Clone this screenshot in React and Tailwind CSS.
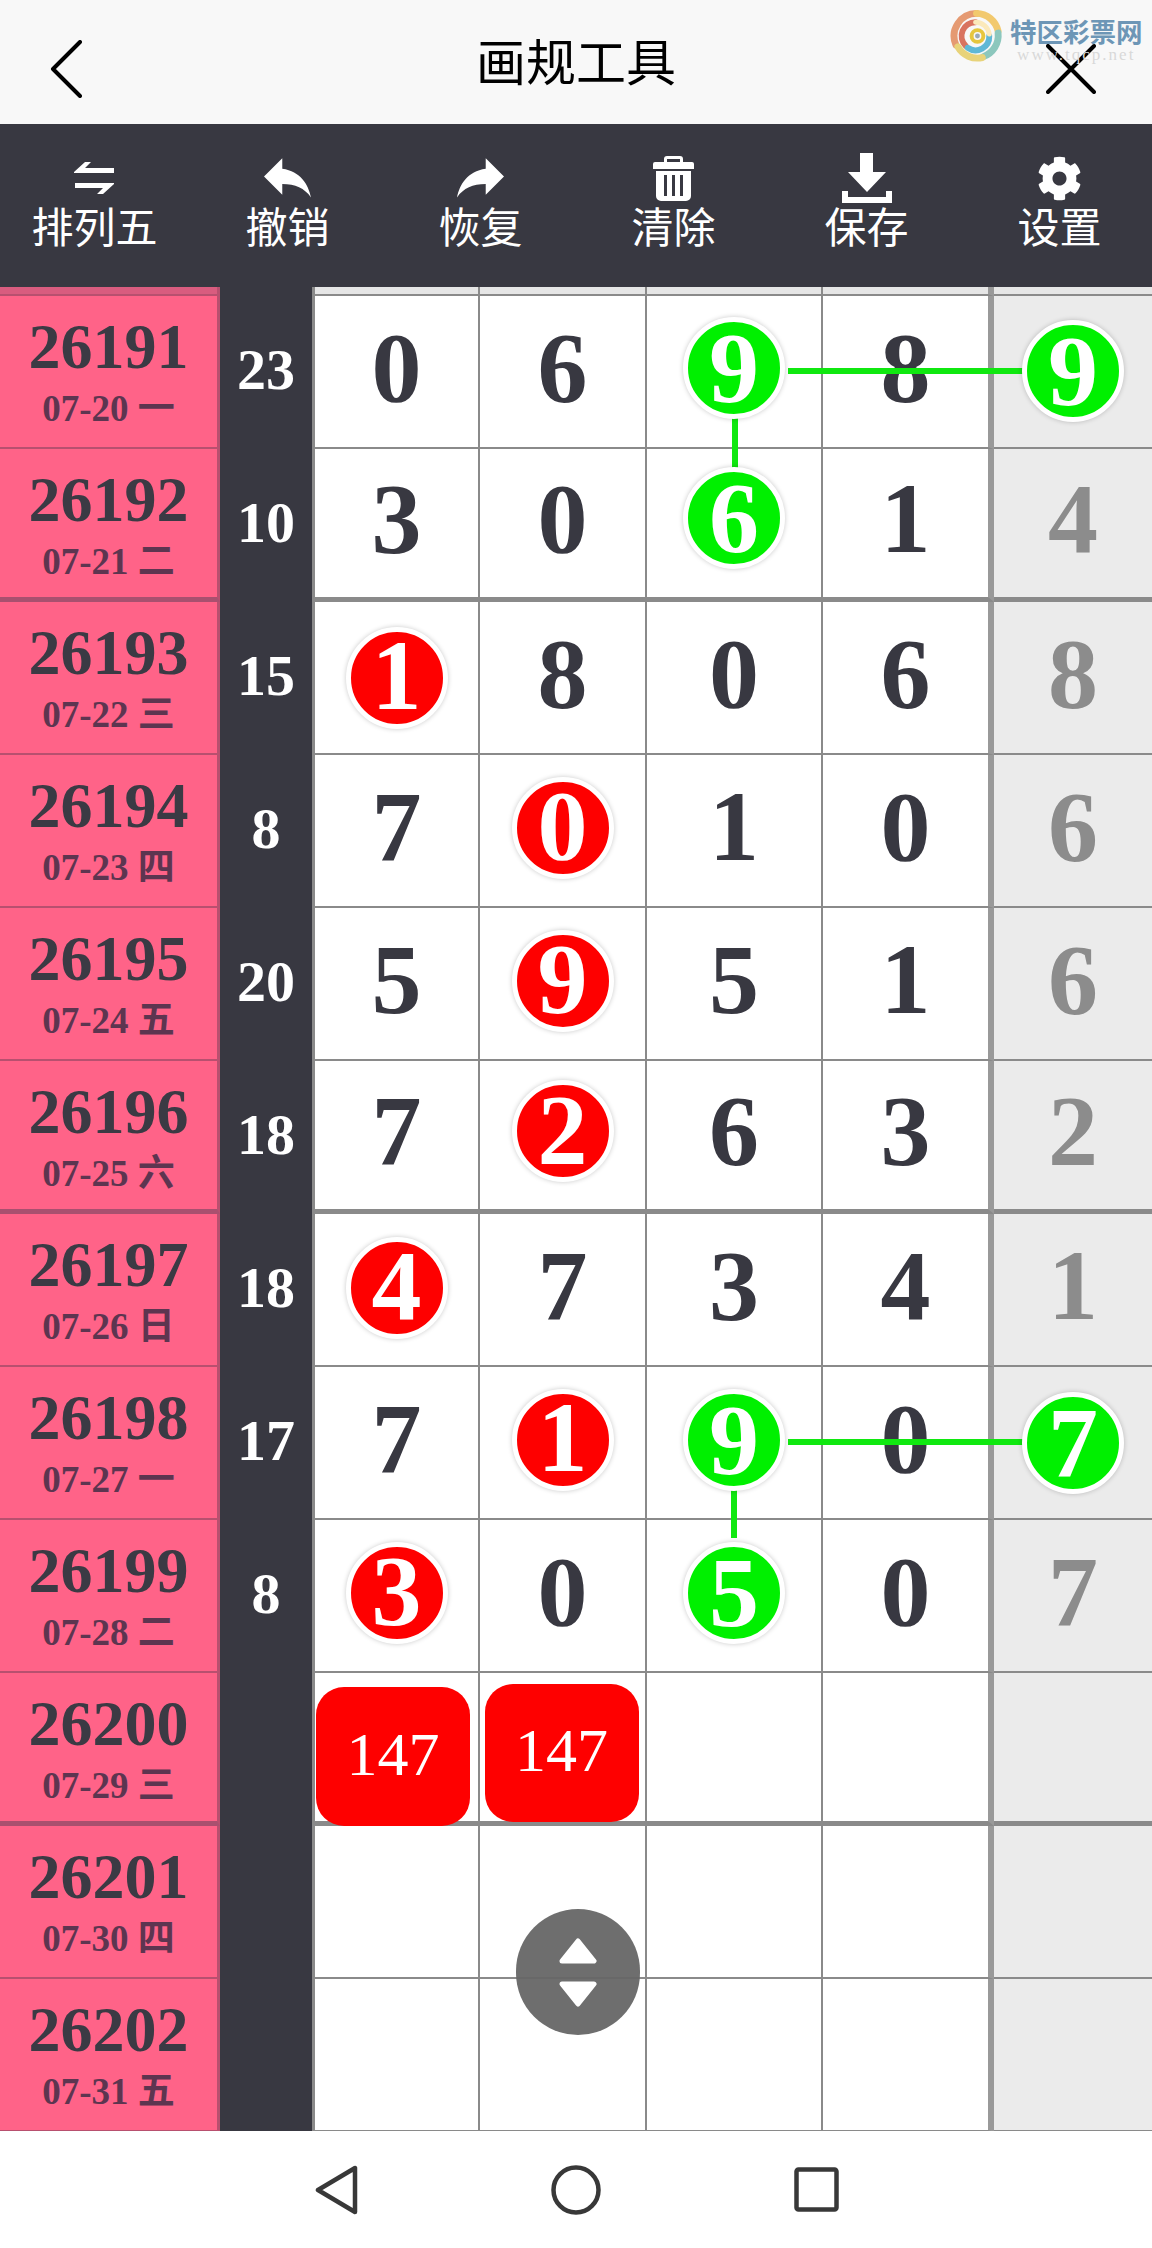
import React from "react";
import { FaCog } from "react-icons/fa";

const rows = [
  { id: "26191", date: "07-20 一", score: "23", nums: ["0", "6", "9", "8", "9"], marks: { 2: ["g", -3], 4: ["g", 0] } },
  { id: "26192", date: "07-21 二", score: "10", nums: ["3", "0", "6", "1", "4"], marks: { 2: ["g", -4] }, heavy: true },
  { id: "26193", date: "07-22 三", score: "15", nums: ["1", "8", "0", "6", "8"], marks: { 0: ["r", 1] } },
  { id: "26194", date: "07-23 四", score: "8", nums: ["7", "0", "1", "0", "6"], marks: { 1: ["r", -2] } },
  { id: "26195", date: "07-24 五", score: "20", nums: ["5", "9", "5", "1", "6"], marks: { 1: ["r", -2] } },
  { id: "26196", date: "07-25 六", score: "18", nums: ["7", "2", "6", "3", "2"], marks: { 1: ["r", -3] }, heavy: true },
  { id: "26197", date: "07-26 日", score: "18", nums: ["4", "7", "3", "4", "1"], marks: { 0: ["r", -1] } },
  { id: "26198", date: "07-27 一", score: "17", nums: ["7", "1", "9", "0", "7"], marks: { 1: ["r", -2], 2: ["g", -2], 4: ["g", 1] } },
  { id: "26199", date: "07-28 二", score: "8", nums: ["3", "0", "5", "0", "7"], marks: { 0: ["r", -2], 2: ["g", -2] } },
  { id: "26200", date: "07-29 三", score: "", nums: [], boxes: true, heavy: true },
  { id: "26201", date: "07-30 四", score: "", nums: [] },
  { id: "26202", date: "07-31 五", score: "", nums: [] },
];

const colClass = [
  "w-[168px] border-l-[3px] border-r-2",
  "w-[167px] border-r-2",
  "w-[176px] border-r-2",
  "w-[171px] border-r-[6px] border-r-[#999999]",
  "flex-1 bg-[#ebebeb] text-[#8c8c8c]",
];

function Mark({ value, color, dy }) {
  return (
    <div
      className={`relative z-20 flex h-[102px] w-[102px] items-center justify-center rounded-full border-[5px] border-white text-white shadow-[0_0_5px_rgba(0,0,0,0.22)] ${color === "g" ? "bg-[#00f000]" : "bg-[#fe0000] pb-[3px]"}`}
      style={{ top: dy + 3 }}
    >
      {value}
    </div>
  );
}

function Row({ row }) {
  const bw = row.heavy ? "border-b-[5px]" : "border-b-2";
  return (
    <div className="flex h-[153px]">
      <div className={`flex w-[220px] flex-col items-center border-r-[3px] border-r-[#b8506f] bg-[#ff6388] pt-[19px] ${row.heavy ? "border-b-[5px] border-b-[#a9506f]" : "border-b-2 border-b-[#b8506f]"}`}>
        <div className="text-[64px] leading-[64px] font-bold text-[#3b3a44]">{row.id}</div>
        <div className="mt-[8px] text-[37px] leading-[44px] font-bold text-[#5d3550]">{row.date}</div>
      </div>
      <div className="flex w-[92px] items-center justify-center bg-[#383841] pb-[6px] text-[58px] font-bold text-white">{row.score}</div>
      {colClass.map((c, i) => (
        <div
          key={i}
          className={`flex justify-center border-[#8a8a8a] pb-[8px] text-[100px] leading-none font-bold ${row.boxes ? "" : "items-center"} ${bw} ${c} ${i < 4 ? "bg-white text-[#383841]" : ""}`}
        >
          {row.boxes && i === 0 && (
            <div className="relative z-10 mt-[14px] mr-[7px] flex h-[139px] w-[154px] items-center justify-center rounded-[28px] bg-[#fe0000] pb-[6px] text-[62px] font-normal text-white">147</div>
          )}
          {row.boxes && i === 1 && (
            <div className="relative z-10 mt-[11px] mr-[2px] flex h-[138px] w-[154px] items-center justify-center rounded-[28px] bg-[#fe0000] pb-[6px] text-[62px] font-normal text-white">147</div>
          )}
          {!row.boxes && row.nums[i] !== undefined && (row.marks && row.marks[i] ? (
            <Mark value={row.nums[i]} color={row.marks[i][0]} dy={row.marks[i][1]} />
          ) : (
            row.nums[i]
          ))}
        </div>
      ))}
    </div>
  );
}

function Tool({ icon, label }) {
  return (
    <div className="flex flex-col items-center">
      <div className="flex h-[52px] items-center justify-center">{icon}</div>
      <div className="-mt-[4px] text-[42px] leading-[50px] font-normal text-white">{label}</div>
    </div>
  );
}

const reply = "M10 9V5l-7 7 7 7v-4.1c5 0 8.5 1.6 11 5.1-1-5-4-10-11-11z";

export default function App() {
  return (
    <div className="h-[2248px] w-[1152px] overflow-hidden bg-white font-['Liberation_Serif','Noto_Sans_CJK_SC',serif]">
      <header className="relative grid h-[124px] grid-cols-[1fr_auto_1fr] items-center bg-[#f8f8f8] font-['Noto_Sans_CJK_SC',sans-serif]">
        <div className="mt-[14px] pl-[50px]">
          <svg width="32" height="58" viewBox="0 0 32 58" fill="none" stroke="#000" strokeWidth="4" strokeLinecap="round" strokeLinejoin="round">
            <path d="M30 2 3 29l27 27" />
          </svg>
        </div>
        <div className="-mt-[7px] text-[50px] leading-none text-black">画规工具</div>
        <div className="mt-[14px] flex justify-end pr-[56px]">
          <svg width="50" height="50" viewBox="0 0 50 50" fill="none" stroke="#000" strokeWidth="4" strokeLinecap="round">
            <path d="M2 2l46 46M48 2 2 48" />
          </svg>
        </div>
        <div className="absolute top-[9px] left-[950px] flex items-start gap-[7px]">
          <svg className="blur-[0.5px]" width="53" height="54" viewBox="0 0 54 54" fill="none" strokeLinecap="round">
            <path d="M27 4A23 23 0 0 0 6 36" stroke="#e59a72" strokeWidth="7" />
            <path d="M27 4A23 23 0 0 1 49 22" stroke="#f2c96e" strokeWidth="7" />
            <path d="M49 24A23 23 0 0 1 34 48" stroke="#8cc7bd" strokeWidth="7" />
            <path d="M8 38A23 23 0 0 0 33 49" stroke="#e8d37a" strokeWidth="7" />
            <path d="M26 13A14 14 0 0 0 16 37" stroke="#d9735f" strokeWidth="6" />
            <path d="M18 39A14 14 0 0 0 40 27" stroke="#5fb8d6" strokeWidth="6" />
            <path d="M26 13A14 14 0 0 1 40 25" stroke="#fbe9bb" strokeWidth="5" />
            <circle cx="28" cy="27" r="6" stroke="#e6c63e" strokeWidth="4" />
            <circle cx="28" cy="27" r="2.5" fill="#9aa9b5" />
          </svg>
          <div className="flex flex-col items-center pt-[8px]">
            <div className="text-[26.5px] leading-[28px] font-bold whitespace-nowrap text-[#6d96b6]">特区彩票网</div>
            <div className="mt-[1px] font-['Liberation_Serif',serif] text-[17px] leading-[17px] tracking-[2px] whitespace-nowrap text-[#d9d9d9]">www.tqcp.net</div>
          </div>
        </div>
      </header>

      <div className="-ml-[2px] grid h-[163px] w-[1158px] grid-cols-[repeat(6,193px)] bg-[#383841] pt-[28px] font-['Noto_Sans_CJK_SC',sans-serif]">
        <Tool
          label="排列五"
          icon={
            <svg width="41" height="32" viewBox="0 0 41 32" fill="#fff">
              <path d="M0 10 11 0h6l-6 6h29v5H0zM1 21h39v1L29 32h-6l6-6H1z" />
            </svg>
          }
        />
        <Tool
          label="撤销"
          icon={
            <svg width="47" height="41" viewBox="3 5 18 15.5" fill="#fff">
              <path d={reply} />
            </svg>
          }
        />
        <Tool
          label="恢复"
          icon={
            <svg width="47" height="41" viewBox="3 5 18 15.5" fill="#fff">
              <path d={reply} transform="matrix(-1 0 0 1 24 0)" />
            </svg>
          }
        />
        <Tool
          label="清除"
          icon={
            <svg width="41" height="45" viewBox="0 0 41 45" fill="#fff">
              <path fillRule="evenodd" d="M11 6V3a3 3 0 0 1 3-3h13a3 3 0 0 1 3 3v3h9a2 2 0 0 1 2 2v5H0V8a2 2 0 0 1 2-2zm3 0h13V3H14zM3 15h35v25a5 5 0 0 1-5 5H8a5 5 0 0 1-5-5zm8 4v21h3V19zm8 0v21h3V19zm8 0v21h3V19z" />
            </svg>
          }
        />
        <Tool
          label="保存"
          icon={
            <svg width="50" height="50" viewBox="0 0 50 50" fill="#fff">
              <path d="M18 0h13v19h13L25 39 6 19h12zM0 38h6v6h38v-6h6v12H0z" />
            </svg>
          }
        />
        <Tool label="设置" icon={<FaCog size={45} color="#fff" />} />
      </div>

      <main className="relative h-[1844px] overflow-hidden">
        <div className="flex h-[9px]">
          <div className="w-[220px] border-r-[3px] border-b-2 border-r-[#b8506f] border-b-[#b8506f] bg-[#d95c7f]" />
          <div className="w-[92px] bg-[#383841]" />
          <div className="w-[168px] border-r-2 border-b-2 border-l-[3px] border-[#8a8a8a] bg-[#e6e6e6]" />
          <div className="w-[167px] border-r-2 border-b-2 border-[#8a8a8a] bg-[#e6e6e6]" />
          <div className="w-[176px] border-r-2 border-b-2 border-[#8a8a8a] bg-[#e6e6e6]" />
          <div className="w-[171px] border-r-[6px] border-b-2 border-[#8a8a8a] border-r-[#999999] bg-[#e6e6e6]" />
          <div className="flex-1 border-b-2 border-[#8a8a8a] bg-[#e6e6e6]" />
        </div>
        {rows.map((r) => (
          <Row key={r.id} row={r} />
        ))}

        <div className="absolute top-[81px] left-[788px] z-10 h-[6px] w-[242px] bg-[#10e810]" />
        <div className="absolute top-[131px] left-[732px] z-10 h-[50px] w-[6px] bg-[#10e810]" />
        <div className="absolute top-[1152px] left-[788px] z-10 h-[6px] w-[242px] bg-[#10e810]" />
        <div className="absolute top-[1203px] left-[731px] z-10 h-[48px] w-[6px] bg-[#10e810]" />

        <div className="absolute top-[1622px] left-[516px] z-30 flex h-[126px] w-[124px] flex-col items-center justify-center gap-[17px] rounded-full bg-[rgba(102,102,102,0.95)]">
          <svg width="38" height="26" viewBox="0 0 38 26" fill="#fff" stroke="#fff" strokeWidth="5" strokeLinejoin="round">
            <path d="M19 3 35 23H3z" />
          </svg>
          <svg width="38" height="26" viewBox="0 0 38 26" fill="#fff" stroke="#fff" strokeWidth="5" strokeLinejoin="round">
            <path d="M19 23 35 3H3z" />
          </svg>
        </div>
      </main>

      <footer className="flex h-[117px] items-center justify-center bg-white">
        <div className="flex w-[240px] justify-center">
          <svg width="43" height="50" viewBox="0 0 43 50" fill="none" stroke="#383838" strokeWidth="4.5" strokeLinejoin="round">
            <path d="M40 3v44L3 25z" />
          </svg>
        </div>
        <div className="flex w-[240px] justify-center">
          <svg width="50" height="50" viewBox="0 0 50 50" fill="none" stroke="#383838" strokeWidth="4.5">
            <circle cx="25" cy="25" r="22.5" />
          </svg>
        </div>
        <div className="flex w-[240px] justify-center">
          <svg width="45" height="45" viewBox="0 0 45 45" fill="none" stroke="#383838" strokeWidth="4.5" strokeLinejoin="round">
            <rect x="2.5" y="2.5" width="40" height="40" rx="2" />
          </svg>
        </div>
      </footer>
    </div>
  );
}
